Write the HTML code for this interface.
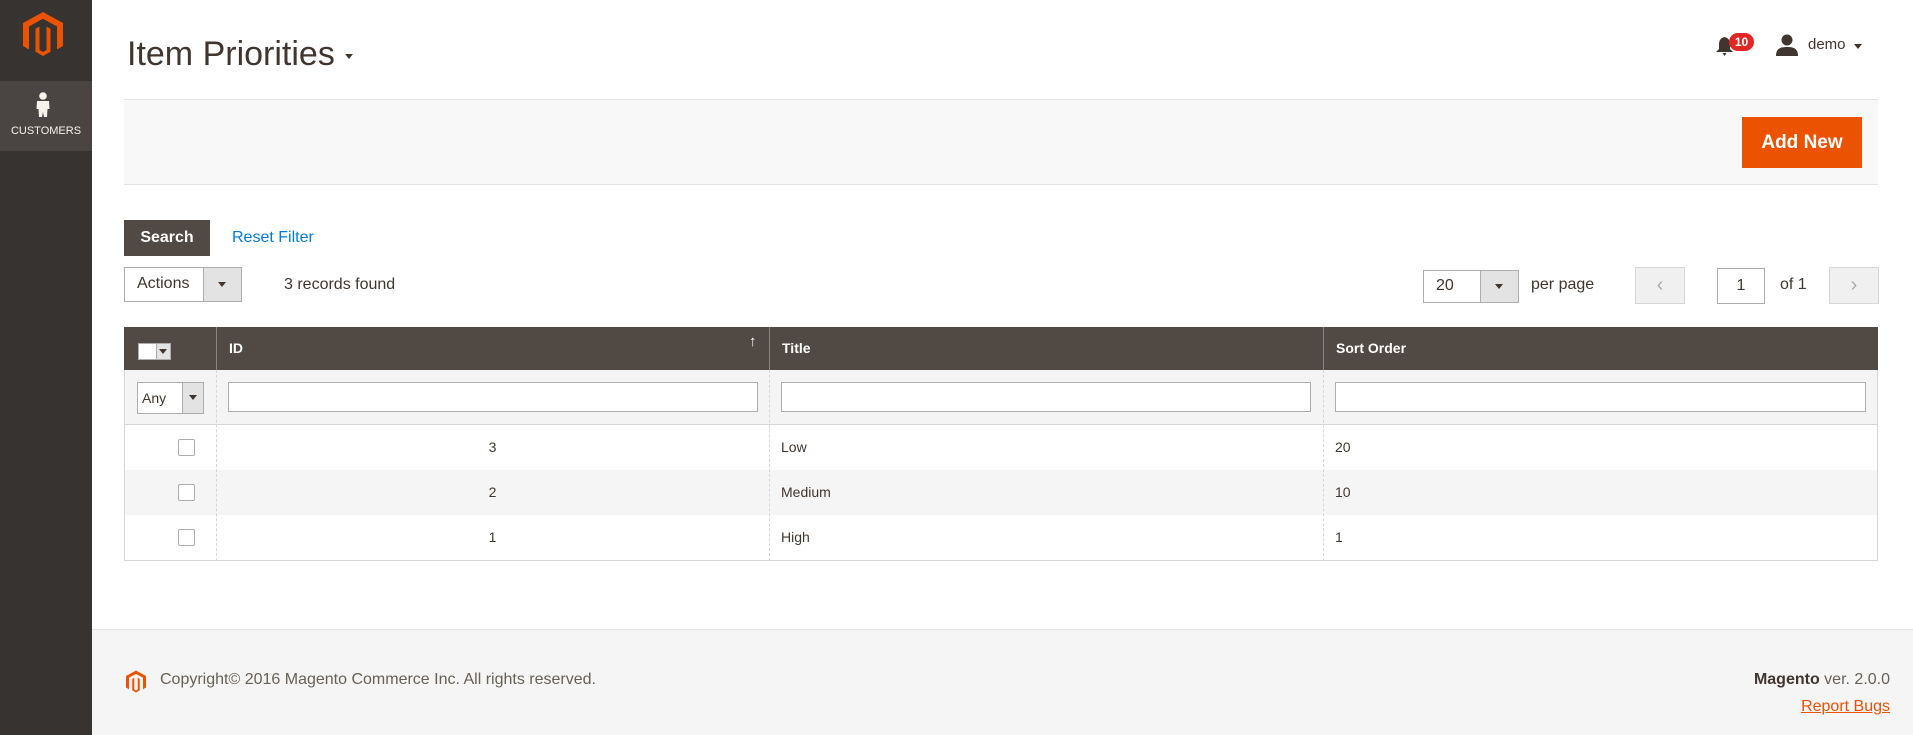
<!DOCTYPE html>
<html><head><meta charset="utf-8"><style>
*{box-sizing:border-box;margin:0;padding:0}
body{width:1913px;height:735px;position:relative;background:#fff;font-family:"Liberation Sans",sans-serif;color:#41362f;overflow:hidden}
.a{position:absolute}
.side{left:0;top:0;width:92px;height:735px;background:#373330}
.cust{left:0;top:81px;width:92px;height:70px;background:#4a4542;color:#f7f3eb;font-size:11px;text-align:center}
.bar{left:124px;top:99px;width:1754px;height:86px;background:#f8f8f8;border-top:1px solid #e3e3e3;border-bottom:1px solid #e3e3e3}
.btn{display:flex;align-items:center;justify-content:center;font-weight:bold;color:#fff}
.sel{border:1px solid #adadad;background:#fff;font-size:16px}
.sel .ar{position:absolute;right:0;top:0;bottom:0;background:#e3e3e3;border-left:1px solid #adadad}
.tri{position:absolute;width:0;height:0;border-left:4px solid transparent;border-right:4px solid transparent;border-top:5px solid #41362f}
.pg{background:#f0f0f0;border:1px solid #d6d6d6;color:#aaa;font-size:20px;display:flex;align-items:center;justify-content:center}
.th{top:327px;height:43px;background:#514943;color:#fff;font-weight:bold;font-size:14px;line-height:43px;border-left:1px solid #8a837f}
.inp{background:#fff;border:1px solid #adadad;height:30px}
.cell{font-size:14px;line-height:45px;height:45px}
.cb{width:17px;height:17px;border:1px solid #adadad;background:#fff;border-radius:2px}
.vl{top:370px;height:191px;border-left:1px dashed #d6d6d6;width:0}
</style></head><body>
<div class="a side"></div>
<svg class="a" style="left:23px;top:12px" width="40" height="44" viewBox="0 0 40 44"><path fill="#eb5202" d="M20 0 L40 11 V34 L34 37.5 V14.5 L20 6.8 L6 14.5 V37.5 L0 34 V11 Z M23.5 14.5 L27.5 16.7 V39.8 L20 44 L12.5 39.8 V16.7 L16.5 14.5 V38 L20 40 L23.5 38 Z"/></svg>
<div class="a cust">
<svg class="a" style="left:36px;top:11px" width="14" height="25" viewBox="0 0 14 25"><circle cx="7" cy="4" r="3.8" fill="#f7f3eb"/><path fill="#f7f3eb" d="M1 9 H13 L13.5 17 H11.5 L11 25 H8 L7 20 L6 25 H3 L2.5 17 H0.5Z"/></svg>
<div class="a" style="left:0;width:92px;top:44px">CUSTOMERS</div></div>
<div class="a" style="left:127px;top:35px;font-size:34px;color:#41362f">Item Priorities</div>
<div class="tri" style="left:345px;top:54px;border-top-color:#41362f"></div>
<svg class="a" style="left:1716px;top:37px" width="17" height="19" viewBox="0 0 17 19"><path fill="#41362f" d="M8.5 0 C4 1 3 4 3 8 V12 L0 15 H17 L14 12 V8 C14 4 13 1 8.5 0Z M6.5 16 H10.5 L8.5 19Z"/></svg>
<div class="a" style="left:1729px;top:33px;width:25px;height:18px;border-radius:9px;background:#e22626;color:#fff;font-size:12px;font-weight:bold;text-align:center;line-height:18px">10</div>
<svg class="a" style="left:1776px;top:34px" width="22" height="22" viewBox="0 0 22 22"><circle cx="11" cy="6" r="5.5" fill="#41362f"/><path fill="#41362f" d="M0 22 C0 14 5 13 11 13 C17 13 22 14 22 22Z"/></svg>
<div class="a" style="left:1808px;top:36px;font-size:15px">demo</div>
<div class="tri" style="left:1854px;top:44px"></div>
<div class="a bar"></div>
<div class="a btn" style="left:1742px;top:117px;width:120px;height:51px;background:#eb5202;font-size:19px">Add New</div>
<div class="a btn" style="left:124px;top:220px;width:86px;height:36px;background:#514943;font-size:16px">Search</div>
<div class="a" style="left:232px;top:229px;color:#007bdb;font-size:16px">Reset Filter</div>
<div class="a sel" style="left:124px;top:267px;width:118px;height:35px"><span class="a" style="left:12px;top:7px">Actions</span><div class="ar" style="width:38px"><div class="tri" style="left:14px;top:14px"></div></div></div>
<div class="a" style="left:284px;top:276px;font-size:16px">3 records found</div>
<div class="a sel" style="left:1423px;top:270px;width:96px;height:33px"><span class="a" style="left:12px;top:6px">20</span><div class="ar" style="width:38px"><div class="tri" style="left:14px;top:13px"></div></div></div>
<div class="a" style="left:1531px;top:276px;font-size:16px">per page</div>
<div class="a pg" style="left:1635px;top:267px;width:50px;height:37px">&#8249;</div>
<div class="a" style="left:1717px;top:268px;width:48px;height:36px;border:1px solid #adadad;font-size:16px;text-align:center;line-height:34px">1</div>
<div class="a" style="left:1780px;top:276px;font-size:16px">of 1</div>
<div class="a pg" style="left:1829px;top:267px;width:50px;height:37px">&#8250;</div>
<div class="a" style="left:124px;top:327px;width:1754px;height:234px;border:1px solid #d6d6d6"></div>
<div class="a th" style="left:124px;width:92px;border-left:none"></div>
<div class="a" style="left:138px;top:343px;width:33px;height:17px;background:#fff;border:1px solid #adadad"><div class="a" style="right:0;top:0;width:14px;height:15px;background:#e3e3e3;border-left:1px solid #adadad"><div class="tri" style="left:2px;top:5px"></div></div></div>
<div class="a th" style="left:216px;width:553px;padding-left:12px">ID<span class="a" style="left:532px;top:-7px;font-weight:normal;font-size:15px">&#8593;</span></div>
<div class="a th" style="left:769px;width:554px;padding-left:12px">Title</div>
<div class="a th" style="left:1323px;width:555px;padding-left:12px">Sort Order</div>
<div class="a" style="left:125px;top:370px;width:1752px;height:55px;background:#f4f4f4;border-bottom:1px solid #d6d6d6"></div>
<div class="a sel" style="left:137px;top:382px;width:67px;height:32px;font-size:14px"><span class="a" style="left:4px;top:7px">Any</span><div class="ar" style="width:21px"><div class="tri" style="left:6px;top:12px"></div></div></div>
<div class="a inp" style="left:228px;top:382px;width:530px"></div>
<div class="a inp" style="left:781px;top:382px;width:530px"></div>
<div class="a inp" style="left:1335px;top:382px;width:531px"></div>
<div class="a" style="left:125px;top:470px;width:1752px;height:45px;background:#f5f5f5"></div>
<div class="a vl" style="left:216px"></div><div class="a vl" style="left:769px"></div><div class="a vl" style="left:1323px"></div>
<div class="a cb" style="left:178px;top:439px"></div>
<div class="a cb" style="left:178px;top:484px"></div>
<div class="a cb" style="left:178px;top:529px"></div>
<div class="a cell" style="left:216px;width:553px;top:425px;text-align:center">3</div>
<div class="a cell" style="left:216px;width:553px;top:470px;text-align:center">2</div>
<div class="a cell" style="left:216px;width:553px;top:515px;text-align:center">1</div>
<div class="a cell" style="left:781px;top:425px">Low</div>
<div class="a cell" style="left:781px;top:470px">Medium</div>
<div class="a cell" style="left:781px;top:515px">High</div>
<div class="a cell" style="left:1335px;top:425px">20</div>
<div class="a cell" style="left:1335px;top:470px">10</div>
<div class="a cell" style="left:1335px;top:515px">1</div>
<div class="a" style="left:92px;top:629px;width:1821px;height:106px;background:#f5f5f5;border-top:1px solid #e3e3e3"></div>
<svg class="a" style="left:126px;top:670px" width="20" height="23" viewBox="0 0 40 44"><path fill="#eb5202" d="M20 0 L40 11 V34 L34 37.5 V14.5 L20 6.8 L6 14.5 V37.5 L0 34 V11 Z M23.5 14.5 L27.5 16.7 V39.8 L20 44 L12.5 39.8 V16.7 L16.5 14.5 V38 L20 40 L23.5 38 Z"/></svg>
<div class="a" style="left:160px;top:671px;font-size:16px;color:#676056">Copyright© 2016 Magento Commerce Inc. All rights reserved.</div>
<div class="a" style="right:23px;top:671px;font-size:16px;color:#676056"><b style="color:#41362f">Magento</b> ver. 2.0.0</div>
<div class="a" style="right:23px;top:698px;font-size:16px;color:#eb5202;text-decoration:underline">Report Bugs</div>
</body></html>
